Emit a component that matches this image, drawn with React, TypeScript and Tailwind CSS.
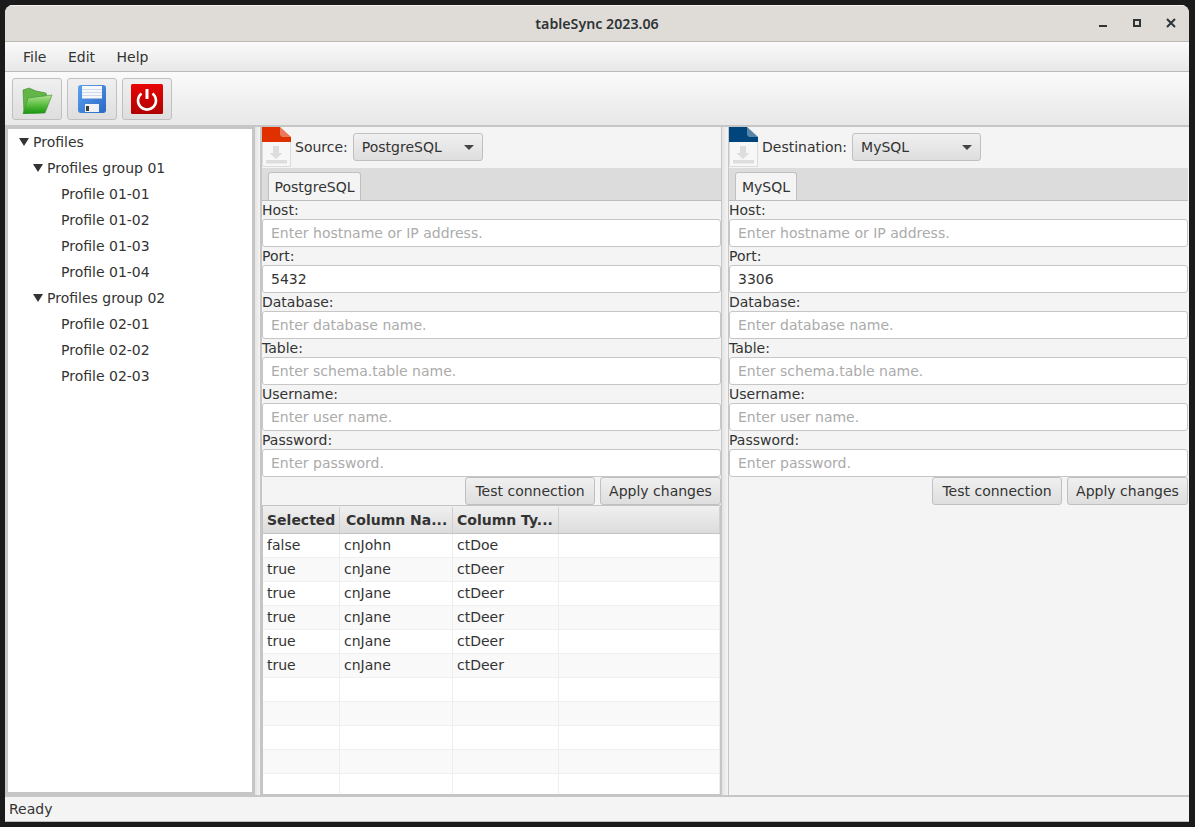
import React from "react";

const font = { fontFamily: '"DejaVu Sans", sans-serif' };
const titleFont = { fontFamily: '"Noto Sans", "Open Sans", sans-serif' };

function FolderIcon() {
  return (
    <svg width="32" height="30" viewBox="0 0 32 30">
      <defs>
        <linearGradient id="fld" x1="0" y1="0" x2="0" y2="1">
          <stop offset="0" stopColor="#b4e492" />
          <stop offset="0.55" stopColor="#55bb3c" />
          <stop offset="1" stopColor="#16930c" />
        </linearGradient>
      </defs>
      <path d="M2 6 L8 4 L15 7 L25 9 L26 13 L7 15 L3 30 Z" fill="#63b548" stroke="#3d8a2a" strokeWidth="0.6" />
      <path d="M7 14 L31 11 L24 29 L2 30 Z" fill="url(#fld)" stroke="#3f9230" strokeWidth="0.6" />
    </svg>
  );
}

function SaveIcon() {
  return (
    <svg width="28" height="28" viewBox="0 0 28 28">
      <defs>
        <linearGradient id="dsk" x1="0" y1="0" x2="1" y2="1">
          <stop offset="0" stopColor="#5aa2f0" />
          <stop offset="1" stopColor="#2a68c4" />
        </linearGradient>
      </defs>
      <rect x="0" y="0" width="28" height="28" rx="3" fill="url(#dsk)" />
      <rect x="4" y="1" width="20" height="12.5" fill="#f8f8f8" />
      <path d="M4 4.5H24M4 7.5H24M4 10.5H24" stroke="#cfdbea" strokeWidth="1" />
      <rect x="7" y="19" width="14" height="8" fill="#f2f2f2" />
      <rect x="8" y="21" width="3" height="5" fill="#3a3a3a" />
    </svg>
  );
}

function PowerIcon() {
  return (
    <svg width="32" height="30" viewBox="0 0 32 30">
      <defs>
        <linearGradient id="pwr" x1="0" y1="0" x2="0" y2="1">
          <stop offset="0" stopColor="#e80404" />
          <stop offset="1" stopColor="#b00000" />
        </linearGradient>
      </defs>
      <rect width="32" height="30" rx="1.5" fill="url(#pwr)" />
      <path d="M10.5 9.5 A9 9 0 1 0 21.5 9.5" fill="none" stroke="#fff" strokeWidth="2.6" />
      <path d="M16 5V15" stroke="#fff" strokeWidth="3" />
    </svg>
  );
}

function FileIcon({ color }: { color: string }) {
  return (
    <svg width="29" height="40" viewBox="0 0 29 40" className="shrink-0">
      <path d="M0.5 1H18L28.5 11V39.5H1L0.5 39Z" fill="#f7f7f7" stroke="#d4d4d4" strokeWidth="0.8" />
      <path d="M0 0H18V0L29 10V15H0Z" fill={color} />
      <path d="M18 0L29 10H20L18 8Z" fill="#ffffff" opacity="0.35" />
      <path d="M11 19H17V26H20.5L14 32L7.5 26H11Z" fill="#dddddd" />
      <rect x="4" y="33" width="21" height="3.5" fill="#dddddd" />
    </svg>
  );
}

function ToolButton({ children }: { children: React.ReactNode }) {
  return (
    <div className="flex h-[42px] w-[50px] items-center justify-center rounded-[3px] border border-[#c0c0c0] bg-gradient-to-b from-[#f0f0f0] to-[#dedede]">
      {children}
    </div>
  );
}

function Arrow() {
  return <span className="mr-[4px] h-0 w-0 border-x-[5px] border-t-[8px] border-x-transparent border-t-[#333]" />;
}

function TreeRow({ indent, open, label }: { indent: string; open?: boolean; label: string }) {
  return (
    <div className={`flex h-[26px] items-center ${indent}`}>
      {open && <Arrow />}
      <span>{label}</span>
    </div>
  );
}

function Field({ label, hint, value }: { label: string; hint: string; value?: string }) {
  return (
    <div className="flex flex-col">
      <div className="h-[18px] leading-[18px]">{label}</div>
      <div className={`flex h-[28px] items-center rounded-[3px] border border-[#c6c6c6] bg-white px-2 ${value ? "" : "text-[#ababab]"}`}>
        {value ?? hint}
      </div>
    </div>
  );
}

function PlainButton({ label, width }: { label: string; width: string }) {
  return (
    <div className={`flex h-[28px] items-center justify-center rounded-[3px] border border-[#c0c0c0] bg-gradient-to-b from-[#f0f0f0] to-[#dedede] ${width}`}>
      {label}
    </div>
  );
}

const columns = ["w-[77px]", "w-[113px]", "w-[106px]", "flex-1"];
const headPad = ["pl-1", "pl-[6px]", "pl-1", "pl-1"];
const rows = [
  ["false", "cnJohn", "ctDoe"],
  ["true", "cnJane", "ctDeer"],
  ["true", "cnJane", "ctDeer"],
  ["true", "cnJane", "ctDeer"],
  ["true", "cnJane", "ctDeer"],
  ["true", "cnJane", "ctDeer"],
  ["", "", ""],
  ["", "", ""],
  ["", "", ""],
  ["", "", ""],
  ["", "", ""],
];

function ColumnsTable() {
  const heads = ["Selected", "Column Na...", "Column Ty...", ""];
  return (
    <div className="flex min-h-0 flex-1 flex-col overflow-hidden border border-[#c4c4c4] bg-white">
      <div className="flex h-[28px] shrink-0 border-b border-[#c4c4c4] bg-gradient-to-b from-[#f0f0f0] to-[#dcdcdc] pt-px font-bold">
        {heads.map((h, i) => (
          <div key={i} className={`flex items-center border-r border-[#d0d0d0] ${headPad[i]} ${columns[i]}`}>
            {h}
          </div>
        ))}
      </div>
      {rows.map((r, i) => (
        <div key={i} className={`flex h-[24px] shrink-0 border-b border-[#f0f0f0] ${i % 2 ? "bg-[#f9f9f9]" : "bg-white"}`}>
          {[...r, ""].map((c, j) => (
            <div key={j} className={`flex items-center border-r border-[#eeeeee] pl-1 ${columns[j]}`}>
              {c}
            </div>
          ))}
        </div>
      ))}
    </div>
  );
}

function ConnectionPane({
  title,
  engine,
  port,
  color,
  comboWidth,
  tabWidth,
  children,
}: {
  title: string;
  engine: string;
  port: string;
  color: string;
  comboWidth: string;
  tabWidth: string;
  children?: React.ReactNode;
}) {
  return (
    <div className="flex w-[459px] shrink-0 flex-col bg-[#f4f4f4]">
      <div className="flex h-[41px] shrink-0 items-start gap-1">
        <FileIcon color={color} />
        <span className="mt-[10px] leading-[20px]">{title}</span>
        <div className={`mt-[6px] ml-px flex h-[28px] items-center justify-between rounded-[3px] border border-[#c0c0c0] bg-gradient-to-b from-[#f0f0f0] to-[#dedede] pr-[8px] pl-2 ${comboWidth}`}>
          <span>{engine}</span>
          <span className="h-0 w-0 border-x-[5px] border-t-[5px] border-x-transparent border-t-[#444]" />
        </div>
      </div>
      <div className="flex h-[33px] shrink-0 items-end border-b border-[#bdbdbd] bg-[#dcdcdc] pl-[6px]">
        <div className={`flex h-[28px] items-center justify-center rounded-t-[3px] border border-b-0 border-[#c0c0c0] bg-[#f4f4f4] pt-px ${tabWidth}`}>
          {engine}
        </div>
      </div>
      <Field label="Host:" hint="Enter hostname or IP address." />
      <Field label="Port:" hint="" value={port} />
      <Field label="Database:" hint="Enter database name." />
      <Field label="Table:" hint="Enter schema.table name." />
      <Field label="Username:" hint="Enter user name." />
      <Field label="Password:" hint="Enter password." />
      <div className="flex shrink-0 justify-end gap-[5px]">
        <PlainButton label="Test connection" width="w-[130px]" />
        <PlainButton label="Apply changes" width="w-[121px]" />
      </div>
      {children}
    </div>
  );
}

export default function App() {
  return (
    <div className="h-[827px] w-[1195px] overflow-hidden bg-[#1b1b1b] pt-[5px] pr-[6px] pb-[5px] pl-[5px] text-[14px] text-[#333]" style={font}>
      <div className="flex h-full flex-col overflow-hidden rounded-t-[8px] bg-[#f4f4f4]">
        <div className="relative flex h-[37px] shrink-0 items-center justify-center border-t border-[#f4f2f0] border-b border-b-[#bcb9b5] bg-[#dfdcd8] text-[#2e3436]">
          <span className="text-[14.2px] font-semibold" style={titleFont}>tableSync 2023.06</span>
          <div className="absolute top-0 right-0 h-full">
            <svg width="10" height="10" viewBox="0 0 10 10" className="absolute top-[14px] right-[81px] h-[10px] w-[10px]">
              <rect x="1" y="5" width="8" height="2" fill="#2e3436" />
            </svg>
            <svg width="10" height="10" viewBox="0 0 10 10" className="absolute top-[13px] right-[46px] h-[10px] w-[10px]">
              <rect x="1" y="1" width="6" height="6" fill="none" stroke="#2e3436" strokeWidth="2" />
            </svg>
            <svg width="10" height="10" viewBox="0 0 10 10" className="absolute top-[12px] right-[13px] h-[10px] w-[10px]">
              <path d="M1 1L9 9M9 1L1 9" stroke="#2e3436" strokeWidth="2" />
            </svg>
          </div>
        </div>
        <div className="flex h-[30px] shrink-0 items-center gap-[21.5px] border-b border-[#bababa] bg-gradient-to-b from-[#fafafa] to-[#e8e8e8] pt-px pl-[18px]">
          <span>File</span>
          <span>Edit</span>
          <span>Help</span>
        </div>
        <div className="flex h-[55px] shrink-0 items-center gap-[5px] border-b-2 border-[#c6c6c6] bg-gradient-to-b from-[#fafafa] to-[#e8e8e8] pt-px pl-[7px]">
          <ToolButton><FolderIcon /></ToolButton>
          <ToolButton><SaveIcon /></ToolButton>
          <ToolButton><PowerIcon /></ToolButton>
        </div>
        <div className="flex min-h-0 flex-1 border-b-2 border-[#c6c6c6]">
          <div className="w-[250px] shrink-0 border-[3px] border-t-2 border-[#c6c6c6] bg-white">
            <TreeRow indent="pl-[11px]" open label="Profiles" />
            <TreeRow indent="pl-[25px]" open label="Profiles group 01" />
            <TreeRow indent="pl-[53px]" label="Profile 01-01" />
            <TreeRow indent="pl-[53px]" label="Profile 01-02" />
            <TreeRow indent="pl-[53px]" label="Profile 01-03" />
            <TreeRow indent="pl-[53px]" label="Profile 01-04" />
            <TreeRow indent="pl-[25px]" open label="Profiles group 02" />
            <TreeRow indent="pl-[53px]" label="Profile 02-01" />
            <TreeRow indent="pl-[53px]" label="Profile 02-02" />
            <TreeRow indent="pl-[53px]" label="Profile 02-03" />
          </div>
          <div className="w-[7px] shrink-0 border-r-2 border-[#c6c6c6] bg-gradient-to-r from-[#e4e4e4] to-[#f4f4f4]" />
          <ConnectionPane title="Source:" engine="PostgreSQL" port="5432" color="#e03000" comboWidth="w-[130px]" tabWidth="w-[93px]">
            <ColumnsTable />
          </ConnectionPane>
          <div className="w-[8px] shrink-0 border-x border-[#c6c6c6] bg-gradient-to-r from-[#e4e4e4] to-[#f4f4f4]" />
          <ConnectionPane title="Destination:" engine="MySQL" port="3306" color="#00457c" comboWidth="w-[129px]" tabWidth="w-[62px]" />
        </div>
        <div className="flex h-[25px] shrink-0 items-center border-b border-[#c0c0c0] pl-1">Ready</div>
      </div>
    </div>
  );
}
